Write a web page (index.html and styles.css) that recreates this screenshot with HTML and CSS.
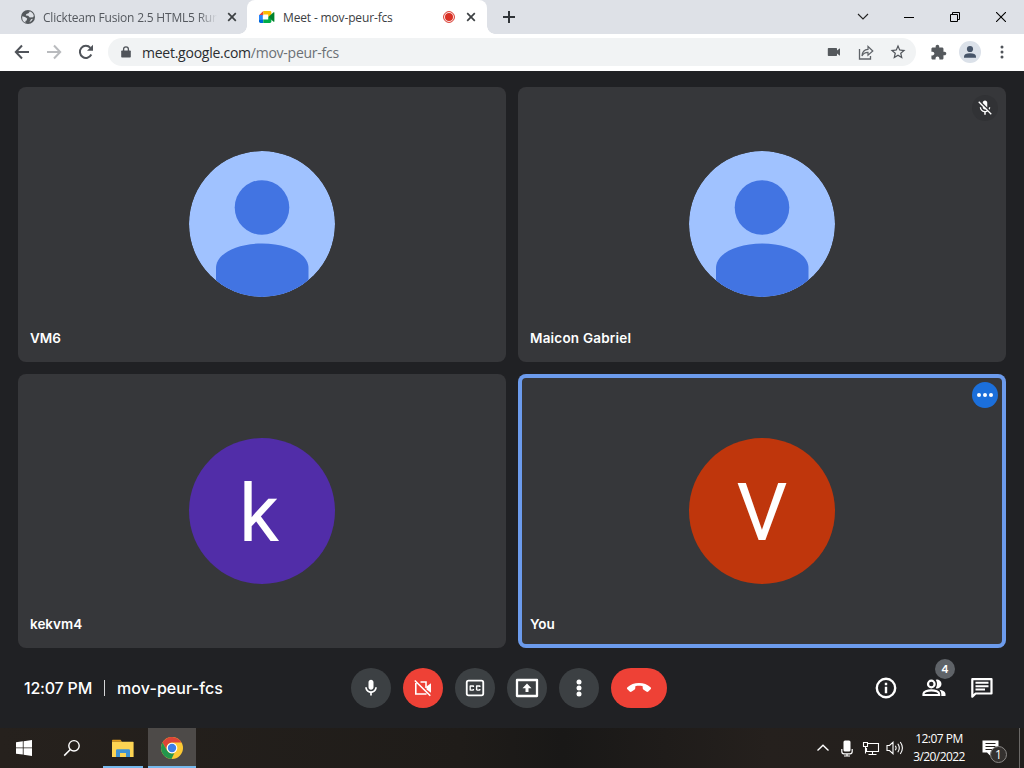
FILE: index.html
```
<!DOCTYPE html>
<html>
<head>
 <meta charset="utf-8">
 <title>Meet - mov-peur-fcs</title>
 <link rel="stylesheet" href="styles.css">
</head>
<body>
 <!-- browser tabs -->
 <div class="tab-strip">
  <div class="tab tab-first">
   <svg width="16" height="16" viewBox="0 0 16 16"><circle cx="8" cy="8" r="7" fill="#54585c"/><path d="M2.3 7.2 5 8l2.2 1.6-.6 1.8-1.2.6.2 1.8A6 6 0 0 1 2.3 7.200zM7.600 2.200 9.800 2.600 8.500 4.200 6.400 5 5.800 6.600 8.200 6.800 9.800 8.600 13.200 8.200 13.800 6.800A6 6 0 0 0 7.600 2.200zM11 10.300l2-.6-1.600 2.400-2 1.200z" fill="#dee1e6"/></svg>
   <span class="tab-title title-fade">Clickteam Fusion 2.5 HTML5 Run</span>
   <svg class="tab-close" width="10" height="10" viewBox="0 0 10 10"><path d="M1.200 1.200l7.600 7.600M8.800 1.200L1.200 8.800" stroke="#3c4043" stroke-width="1.700"/></svg>
  </div>
  <div class="tab tab-active">
   <svg width="16" height="16" viewBox="0 0 16 16"><path d="M0 6.200 4.300 2v4.200z" fill="#ea4335"/><path d="M4.300 2H11q1.400 0 1.400 1.400V6L9.200 8V5.600H4.300z" fill="#fbbc04"/><path d="M0 6h3.800v4.800H0z" fill="#2684fc"/><path d="M0 10.400h4.300V14H1.400Q0 14 0 12.600z" fill="#0066da"/><path d="M4.300 10.400h4.900V8l3.200 2v2.600q0 1.400-1.400 1.400H4.300z" fill="#00ac47"/><path d="M9.200 8l5.400-4.700q.8-.4.800.5v8.400q0 .9-.8.5z" fill="#00832d"/></svg>
   <span class="tab-title">Meet - mov-peur-fcs</span>
   <svg class="tab-record" width="14" height="14" viewBox="0 0 14 14"><circle cx="7" cy="7" r="5.400" fill="none" stroke="#d93025" stroke-width="1"/><circle cx="7" cy="7" r="4" fill="#d93025"/></svg>
   <svg class="tab-close" width="10" height="10" viewBox="0 0 10 10"><path d="M1.200 1.200l7.600 7.600M8.800 1.200L1.200 8.800" stroke="#3c4043" stroke-width="1.700"/></svg>
  </div>
  <svg class="new-tab" width="12" height="12" viewBox="0 0 12 12"><path d="M6 0v12M0 6h12" stroke="#303438" stroke-width="2"/></svg>
  <div class="window-buttons">
   <span><svg width="12" height="8" viewBox="0 0 12 8"><path d="M1 1l5 5 5-5" fill="none" stroke="#222" stroke-width="1.100"/></svg></span>
   <span><svg width="10" height="10" viewBox="0 0 10 10"><path d="M0 5.500h10" stroke="#000"/></svg></span>
   <span><svg width="10" height="10" viewBox="0 0 10 10"><path d="M.5 2.500h7v7h-7zM2.500 2.500v-2h7v7h-2" fill="none" stroke="#000"/></svg></span>
   <span><svg width="10" height="10" viewBox="0 0 10 10"><path d="M0 0l10 10M10 0L0 10" stroke="#000" stroke-width="1.100"/></svg></span>
  </div>
 </div>

 <!-- address bar -->
 <div class="toolbar">
  <span class="tool"><svg width="16" height="16" viewBox="0 0 16 16"><path d="M15 8H2M8 1.500L1.800 8 8 14.500" fill="none" stroke="#50545a" stroke-width="2"/></svg></span>
  <span class="tool"><svg width="16" height="16" viewBox="0 0 16 16"><path d="M1 8h13M8 1.500L14.200 8 8 14.500" fill="none" stroke="#b9bbbe" stroke-width="2"/></svg></span>
  <span class="tool"><svg width="16" height="16" viewBox="0 0 16 16"><path d="M13.300 10.500A6 6 0 1 1 12.400 3.900" fill="none" stroke="#50545a" stroke-width="2"/><path d="M15 .8v6H9z" fill="#50545a"/></svg></span>
  <div class="omnibox">
   <svg class="lock" width="10" height="12" viewBox="0 0 10 12"><path d="M1 4.500h8q.8 0 .8.800v5.400q0 .8-.8.800H1q-.8 0-.8-.8V5.300q0-.8.8-.8z" fill="#50545a"/><path d="M2.600 5V3.200a2.400 2.400 0 0 1 4.800 0V5" fill="none" stroke="#50545a" stroke-width="1.300"/></svg>
   <span class="url">meet.google.com<span class="url-path">/mov-peur-fcs</span></span>
   <span class="tool"><svg width="14" height="10" viewBox="0 0 14 10"><path d="M1.500 1h7.800q.7 0 .7.700v1.700L13 1.200v7.600L10 6.600v1.700q0 .7-.7.700H1.500q-.7 0-.7-.7V1.700q0-.7.7-.7z" fill="#55595d"/></svg></span>
   <span class="tool"><svg width="16" height="15" viewBox="0 0 16 15"><path d="M1.500 4v10h11v-3" fill="none" stroke="#5f6368" stroke-width="1.300"/><path d="M4 11q.4-6.300 6-6.600V1.500L14.800 6 10 10.200V7.400Q6 7.300 4 11z" fill="none" stroke="#5f6368" stroke-width="1.200"/></svg></span>
   <span class="tool"><svg width="18" height="18" viewBox="0 0 24 24"><path d="M22 9.240l-7.190-.62L12 2 9.190 8.630 2 9.240l5.460 4.730L5.820 21 12 17.270 18.180 21l-1.630-7.030L22 9.240zM12 15.400l-3.760 2.270 1-4.280-3.320-2.880 4.380-.38L12 6.100l1.710 4.040 4.380.38-3.320 2.880 1 4.280L12 15.400z" fill="#50545a"/></svg></span>
  </div>
  <span class="tool"><svg width="17" height="17" viewBox="0 0 24 24"><path d="M20.500 11H19V7c0-1.100-.9-2-2-2h-4V3.500C13 2.120 11.880 1 10.500 1S8 2.120 8 3.500V5H4c-1.100 0-1.990.9-1.990 2v3.800H3.500c1.490 0 2.700 1.210 2.700 2.700s-1.210 2.700-2.700 2.700H2V20c0 1.100.9 2 2 2h3.800v-1.500c0-1.490 1.210-2.700 2.700-2.700 1.490 0 2.700 1.210 2.700 2.700V22H17c1.100 0 2-.9 2-2v-4h1.500c1.380 0 2.500-1.120 2.500-2.500S21.880 11 20.500 11z" fill="#55595d"/></svg></span>
  <span class="tool"><svg width="22" height="22" viewBox="0 0 22 22"><circle cx="11" cy="11" r="11" fill="#dbe1e9"/><circle cx="11" cy="8" r="3.100" fill="#475569"/><path d="M5 16.800v-1.600q.4-2.900 6-2.900t6 2.900v1.600z" fill="#475569"/></svg></span>
  <span class="tool"><svg width="4" height="14" viewBox="0 0 4 14"><g fill="#50545a"><circle cx="2" cy="2" r="1.500"/><circle cx="2" cy="7" r="1.500"/><circle cx="2" cy="12" r="1.500"/></g></svg></span>
 </div>

 <!-- the call -->
 <div class="meet">
  <div class="tiles">
   <div class="tile tile-top">
    <svg class="avatar" viewBox="0 0 146 146"><clipPath id="round"><circle cx="73" cy="73" r="73"/></clipPath><g clip-path="url(#round)"><path d="M0 0h146v146H0z" fill="#a0c2ff"/><circle cx="73" cy="56.500" r="27.300" fill="#4274e2"/><path d="M27 146v-29C27 103 47 92.500 73.200 92.500S119.500 103 119.500 117v29z" fill="#4274e2"/></g></svg>
    <span class="name">VM6</span>
   </div>
   <div class="tile tile-top">
    <svg class="avatar" viewBox="0 0 146 146"><g clip-path="url(#round)"><path d="M0 0h146v146H0z" fill="#a0c2ff"/><circle cx="73" cy="56.500" r="27.300" fill="#4274e2"/><path d="M27 146v-29C27 103 47 92.500 73.200 92.500S119.500 103 119.500 117v29z" fill="#4274e2"/></g></svg>
    <span class="name name-wide">Maicon Gabriel</span>
    <span class="tile-badge muted"><svg width="18" height="18" viewBox="0 0 24 24"><path d="M19 11h-1.700c0 .74-.16 1.430-.43 2.050l1.230 1.230c.56-.98.9-2.090.9-3.280zm-4.020.170c0-.06.020-.11.020-.17V5c0-1.660-1.340-3-3-3S9 3.340 9 5v.18l5.980 5.990zM4.270 3L3 4.270l6.010 6.010V11c0 1.660 1.330 3 2.990 3 .22 0 .44-.03.650-.08l1.660 1.660c-.71.33-1.500.52-2.310.52-2.760 0-5.300-2.100-5.300-5.100H5c0 3.410 2.720 6.230 6 6.720V21h2v-3.280c.91-.13 1.770-.45 2.540-.9L19.730 21 21 19.730 4.270 3z" fill="#fff"/></svg></span>
   </div>
   <div class="tile">
    <div class="avatar letter letter-k">k</div>
    <span class="name">kekvm4</span>
   </div>
   <div class="tile speaking">
    <div class="avatar letter letter-v">V</div>
    <span class="name">You</span>
    <span class="tile-badge more"><svg width="18" height="6" viewBox="0 0 18 6"><g fill="#fff"><circle cx="3" cy="3" r="2"/><circle cx="9" cy="3" r="2"/><circle cx="15" cy="3" r="2"/></g></svg></span>
   </div>
  </div>

  <!-- call controls -->
  <div class="call-bar">
   <div class="call-info"><span class="call-time">12:07 PM</span><span class="divider"></span><span class="call-code">mov-peur-fcs</span></div>
   <div class="controls">
    <span class="control"><svg width="20" height="20" viewBox="0 0 24 24"><path d="M12 14c1.660 0 3-1.340 3-3V5c0-1.660-1.340-3-3-3S9 3.340 9 5v6c0 1.660 1.340 3 3 3zm5-3c0 2.760-2.240 5-5 5s-5-2.240-5-5H5c0 3.530 2.610 6.430 6 6.920V21h2v-3.080c3.390-.49 6-3.390 6-6.920h-2z"/></svg></span>
    <span class="control red"><svg width="20" height="20" viewBox="0 0 20 20"><path d="M7.500 4H13v6M2.800 5v11H13.500M1.800 2.500l15.500 15.300" fill="none" stroke="#fff" stroke-width="1.600"/><path d="M13.500 8.600 18 5.200v9.600l-4.500-3.400z"/></svg></span>
    <span class="control"><svg width="22" height="22" viewBox="0 0 24 24"><path d="M5 4h14a2 2 0 0 1 2 2v12a2 2 0 0 1-2 2H5a2 2 0 0 1-2-2V6a2 2 0 0 1 2-2z" fill="none" stroke="#fff" stroke-width="2"/><path d="M11 11H9.500v-.5h-2v3h2V13H11v1c0 .55-.45 1-1 1H7c-.55 0-1-.45-1-1v-4c0-.55.45-1 1-1h3c.55 0 1 .45 1 1v1zM18 11h-1.500v-.5h-2v3h2V13H18v1c0 .55-.45 1-1 1h-3c-.55 0-1-.45-1-1v-4c0-.55.45-1 1-1h3c.55 0 1 .45 1 1v1z"/></svg></span>
    <span class="control"><svg width="24" height="20" viewBox="0 0 24 20"><path d="M2 2h20v16H2z" fill="none" stroke="#fff" stroke-width="2.300" stroke-linejoin="round"/><path d="M12 5.500l4.500 4.700h-3V14h-3v-3.800h-3z"/></svg></span>
    <span class="control"><svg width="6" height="18" viewBox="0 0 6 18"><circle cx="3" cy="3" r="2.500"/><circle cx="3" cy="9" r="2.500"/><circle cx="3" cy="15" r="2.500"/></svg></span>
    <span class="control red hang-up"><svg width="26" height="12" viewBox="0 0 26 12"><path d="M13 1c4.600 0 8.500 1.500 11.500 4.300.7.700.7 1.400.1 2l-2.300 2.200c-.6.6-1.300.6-2 .1l-3-2.200c-.4-.3-.6-.7-.6-1.300V4.300C15.500 3.900 14.300 3.800 13 3.800s-2.500.1-3.700.5v1.800c0 .6-.2 1-.6 1.300l-3 2.200c-.7.500-1.400.5-2-.1L1.400 7.300c-.6-.6-.6-1.300.1-2C4.500 2.500 8.400 1 13 1z"/></svg></span>
   </div>
   <div class="side-buttons">
    <span class="side"><svg width="24" height="24" viewBox="0 0 24 24"><circle cx="12" cy="12" r="9.200" fill="none" stroke="#fff" stroke-width="2.400"/><path d="M10.800 6.800h2.400v2.400h-2.400zM10.800 10.800h2.400v6.400h-2.400z"/></svg></span>
    <span class="side"><svg width="26" height="20" viewBox="0 0 26 20"><circle cx="10.300" cy="6" r="3.300" fill="none" stroke="#fff" stroke-width="2.200"/><path d="M2.500 17v-1.200c0-2 3.800-3.400 7.800-3.400s7.800 1.400 7.800 3.400V17z" fill="none" stroke="#fff" stroke-width="2.200"/><path d="M14.800 1.800a4.400 4.400 0 1 1 0 8.400q2.400-4.200 0-8.400zM18.500 11.800c3.500.5 6 2 6 4.200v2.100h-4.200V16q0-2.400-1.800-4.200z"/></svg><span class="people-count">4</span></span>
    <span class="side"><svg width="24" height="24" viewBox="0 0 24 24"><path d="M2.300 3.200h19.200v14.300H5.600l-3.300 3.200z" fill="none" stroke="#fff" stroke-width="2.200" stroke-linejoin="round"/><path d="M5.500 5.800h13v2h-13zM5.500 9.200h13v2h-13zM5.500 12.600h9.500v2H5.500z"/></svg></span>
   </div>
  </div>
 </div>

 <!-- windows taskbar -->
 <div class="taskbar">
  <span class="task"><svg width="16" height="16" viewBox="0 0 16 16"><path d="M0 2.300l6.800-1v6.200H0zM7.600 1.200L16 0v7.500H7.600zM0 8.300h6.800v6.300L0 13.700zM7.600 8.300H16V16l-8.400-1.200z" fill="#fff"/></svg></span>
  <span class="task"><svg width="18" height="18" viewBox="0 0 18 18"><circle cx="11" cy="6.800" r="5.200" fill="none" stroke="#fff" stroke-width="1.400"/><path d="M7.300 10.500L1.200 16.600" stroke="#fff" stroke-width="1.500"/></svg></span>
  <span class="task task-open"><svg width="22" height="19" viewBox="0 0 22 19"><path d="M0 1.500Q0 .8.700.8h7.800l1.500 2H0z" fill="#e09c1d"/><path d="M0 2.800h21q.6 0 .6.700V18H0z" fill="#fcd453"/><path d="M4 18v-6.500q0-1.300 1.300-1.300h11.400q1.300 0 1.300 1.300V18h-4v-4H8v4z" fill="#3f92d2"/></svg></span>
  <span class="task task-active"><svg width="24" height="24" viewBox="0 0 24 24"><circle cx="12" cy="12" r="11" fill="#fcc934"/><path d="M2.500 6.400a11 11 0 0 1 19 .1H12a5.500 5.500 0 0 0-4.800 8.200z" fill="#dc4437"/><path d="M2.500 6.500 7.200 14.700a5.500 5.500 0 0 0 7.200 2.200L11.500 23A11 11 0 0 1 2.500 6.500z" fill="#23964d"/><circle cx="12" cy="12" r="5.300" fill="#fff"/><circle cx="12" cy="12" r="4.200" fill="#3d7ee6"/></svg></span>
  <div class="tray">
   <span><svg width="14" height="8" viewBox="0 0 14 8"><path d="M1.500 6.500L7 1.300l5.500 5.200" fill="none" stroke="#fff" stroke-width="1.400"/></svg></span>
   <span><svg width="13" height="17" viewBox="0 0 13 17"><rect x="2.500" y=".5" width="7" height="11" rx="1.500" fill="#fff"/><path d="M.8 9v2.500q0 2.300 2.200 2.300h6q2.200 0 2.200-2.300V9M6 13.500V16M3 16h6" fill="none" stroke="#fff" stroke-width="1.200"/></svg></span>
   <span><svg width="18" height="15" viewBox="0 0 18 15"><path d="M5.500 2.500h11v8H4.500V7M10.500 10.500v3M6.500 13.500h8M1.500 1.500h4v4h-4zM3.500 5.500v7" fill="none" stroke="#fff" stroke-width="1.100"/></svg></span>
   <span><svg width="18" height="16" viewBox="0 0 18 16"><path d="M1 5.500h2.500L7 2.300v11.400l-3.500-3.200H1zM9.300 5.700q1.600 2.300 0 4.600M11.800 3.800q3 4.200 0 8.400M14.300 2q4.200 6 0 12" fill="none" stroke="#fff" stroke-width="1.100"/></svg></span>
   <div class="clock"><span>12:07 PM</span><span class="date">3/20/2022</span></div>
   <div class="notifications"><svg width="17" height="16" viewBox="0 0 17 16"><path d="M.5.500h16v12H8.500V16L5 12.500H.5z" fill="#fff"/><path d="M3.500 3.500h10M3.500 6.500h10M3.500 9.500h7" stroke="#24201d"/></svg><span class="notice-count">1</span></div>
   <span class="show-desktop"></span>
  </div>
 </div>
</body>
</html>
```
FILE: styles.css
```
body {
 margin: 0;
 width: 1024px;
 height: 768px;
 overflow: hidden;
 display: flex;
 flex-direction: column;
 font-family: "Open Sans", "Noto Sans", sans-serif;
}
svg {
 display: block;
 flex: none;
}

/* tabs */
.tab-strip {
 display: flex;
 align-items: center;
 height: 34px;
 background: #dee1e7;
}
.tab {
 display: flex;
 align-items: center;
 box-sizing: border-box;
 height: 34px;
 font-size: 12px;
 color: #3c4043;
}
.tab-first {
 width: 247px;
 padding: 0 10px 0 20px;
 color: #54585e;
}
.tab-active {
 position: relative;
 width: 240px;
 padding: 0 11px 0 12px;
 background: #fff;
 border-radius: 8px 8px 0 0;
}
/* curved feet of the active tab */
.tab-active::before,
.tab-active::after {
 content: "";
 position: absolute;
 bottom: 0;
 width: 8px;
 height: 8px;
}
.tab-active::before {
 left: -8px;
 background: radial-gradient(circle at 0 0, transparent 7.5px, #fff 8px);
}
.tab-active::after {
 right: -8px;
 background: radial-gradient(circle at 100% 0, transparent 7.5px, #fff 8px);
}
.tab-title {
 margin-left: 8px;
 white-space: nowrap;
 letter-spacing: -0.15px;
}
.title-fade {
 width: 180px;
 margin-left: 7px;
 letter-spacing: -0.2px;
 -webkit-mask-image: linear-gradient(90deg, #000 155px, transparent 174px);
 mask-image: linear-gradient(90deg, #000 155px, transparent 174px);
}
.tab-close {
 margin-left: auto;
}
.tab-record {
 margin-left: auto;
}
.tab-record + .tab-close {
 margin-left: 10px;
}
.new-tab {
 margin-left: 16px;
}
.window-buttons {
 display: flex;
 margin-left: auto;
 height: 28px;
}
.window-buttons span {
 display: flex;
 align-items: center;
 justify-content: center;
 width: 46px;
}

/* address bar */
.toolbar {
 display: flex;
 align-items: center;
 box-sizing: border-box;
 height: 37px;
 padding: 0 6px 1px;
 background: #fff;
}
.tool {
 display: flex;
 align-items: center;
 justify-content: center;
 width: 32px;
}
.omnibox {
 display: flex;
 align-items: center;
 flex: 1;
 height: 28px;
 margin: 0 6px;
 padding-right: 2px;
 background: #f1f3f4;
 border-radius: 14px;
}
.lock {
 margin-left: 13px;
}
.url {
 flex: 1;
 margin-left: 11px;
 font-size: 14px;
 letter-spacing: -0.25px;
 color: #2a2d30;
}
.url-path {
 color: #6b7075;
}

/* call area */
.meet {
 display: flex;
 flex-direction: column;
 height: 657px;
 background: #202124;
 color: #fff;
}
.tiles {
 display: grid;
 grid-template-columns: 488px 488px;
 grid-template-rows: 275px 274px;
 gap: 12px;
 padding: 16px 18px 0;
}
.tile {
 position: relative;
 display: flex;
 align-items: center;
 justify-content: center;
 background: #36373a;
 border-radius: 8px;
}
.tile-top {
 box-sizing: border-box;
 padding-bottom: 1px;
}
.speaking {
 box-shadow: inset 0 0 0 4px #6c9bec;
}
.avatar {
 width: 146px;
 height: 146px;
 border-radius: 50%;
}
.letter {
 box-sizing: border-box;
 font: 80px/150px Roboto, sans-serif;
 text-align: center;
}
.letter-k {
 padding-right: 6px;
 font-size: 79px;
 line-height: 153px;
 background: #512da8;
}
.letter-v {
 background: #bf360c;
}
.name {
 position: absolute;
 left: 12px;
 bottom: 15px;
 font: 600 13.5px/18px Inter, sans-serif;
}
.name-wide {
 letter-spacing: 0.2px;
}
.tile-badge {
 position: absolute;
 top: 8px;
 right: 8px;
 display: flex;
 align-items: center;
 justify-content: center;
 width: 26px;
 height: 26px;
 border-radius: 50%;
}
.muted {
 background: #313235;
}
.more {
 background: #1b6fdb;
}

/* call bar */
.call-bar {
 display: flex;
 align-items: center;
 height: 80px;
 padding-right: 18px;
}
.call-info {
 display: flex;
 align-items: center;
 box-sizing: border-box;
 width: 351px;
 padding-left: 24px;
 font: 500 16px/24px Inter, sans-serif;
}
.call-time {
 letter-spacing: -0.2px;
}
.call-code {
 letter-spacing: 0.08px;
}
.divider {
 width: 1px;
 height: 16px;
 margin: 0 12px;
 background: #d5d6d8;
}
.controls {
 display: flex;
 gap: 12px;
}
.control {
 display: flex;
 align-items: center;
 justify-content: center;
 width: 40px;
 height: 40px;
 border-radius: 20px;
 background: #3c4043;
}
.control svg,
.side svg {
 fill: #fff;
}
.red {
 background: #ee4136;
}
.hang-up {
 width: 56px;
}
.side-buttons {
 display: flex;
 margin-left: auto;
}
.side {
 position: relative;
 display: flex;
 align-items: center;
 justify-content: center;
 width: 48px;
 height: 48px;
}
.people-count {
 position: absolute;
 top: -5px;
 left: 25px;
 width: 20px;
 height: 20px;
 border-radius: 50%;
 background: #5f6368;
 font: 600 11px/20px Inter, sans-serif;
 text-align: center;
}

/* taskbar */
.taskbar {
 display: flex;
 height: 40px;
 background: linear-gradient(90deg, #26211d, #1f1c19 45%, #191817 55%, #25201d 75%, #211f1d);
 color: #fff;
}
.task {
 display: flex;
 align-items: center;
 justify-content: center;
 width: 48px;
}
.task-open {
 width: 40px;
 margin: 0 5px 0 7px;
 box-shadow: inset 0 -2px #76b9ed;
}
.task-active {
 background: #4d4a48;
 box-shadow: inset 0 -2px #76b9ed;
}
.tray {
 display: flex;
 align-items: center;
 margin-left: auto;
}
.tray > span {
 display: flex;
 justify-content: center;
 width: 24px;
}
.clock {
 display: flex;
 flex-direction: column;
 align-items: center;
 width: 64px;
 font-size: 12px;
 line-height: 18px;
 letter-spacing: -0.5px;
 white-space: nowrap;
}
.date {
 letter-spacing: -0.6px;
}
.notifications {
 position: relative;
 width: 37px;
 margin: 0 0 0 11px;
}
.notice-count {
 position: absolute;
 left: 8px;
 top: 6px;
 width: 15px;
 height: 15px;
 border: 1px solid #8a8886;
 border-radius: 50%;
 background: #34312f;
 font-size: 12px;
 line-height: 15px;
 text-align: center;
}
.tray > .show-desktop {
 width: 5px;
 height: 40px;
 box-sizing: border-box;
 border-left: 1px solid #6b6967;
}
```
